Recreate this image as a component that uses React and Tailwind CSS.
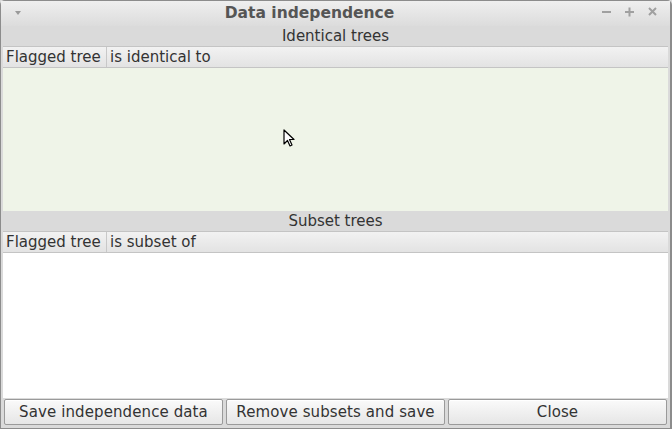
import React from 'react';

const font = { fontFamily: '"DejaVu Sans", Verdana, sans-serif' };

const HeaderRow = ({ second }) => (
  <div className="flex h-[22px] border-t border-b border-[#c4c4c4] bg-gradient-to-b from-[#f2f2f2] to-[#e3e3e3] text-[15px] text-[#333333] leading-[20px]">
    <div className="w-[104px] shrink-0 border-r border-[#c8c8c8] pl-[3px] whitespace-nowrap overflow-hidden">Flagged tree</div>
    <div className="flex-1 pl-[3px]">{second}</div>
  </div>
);

const SectionLabel = ({ children }) => (
  <div className="h-[20px] text-center text-[15px] leading-[20px] text-[#333333]">{children}</div>
);

const Btn = ({ children }) => (
  <button className="flex-1 h-[26px] rounded-[2px] border border-[#9a9a9a] bg-gradient-to-b from-[#fafafa] to-[#e6e6e6] text-[15px] tracking-[0.1px] text-[#333333] shadow-[inset_0_1px_0_#ffffff]">
    {children}
  </button>
);

export default function App() {
  return (
    <div style={font} className="relative w-[672px] h-[429px] overflow-hidden bg-[#dadada]">
      <div className="flex h-full flex-col rounded-t-[5px] border-l border-r-2 border-t border-b border-[#8c8c8c]">
        {/* Title bar */}
        <div className="relative flex h-[25px] shrink-0 items-center justify-center pr-[52px] bg-gradient-to-b from-[#efefef] to-[#dcdcdc]">
          <span className="absolute left-[14px] top-[10px] h-0 w-0 border-x-[3px] border-t-[4px] border-x-transparent border-t-[#9a9a9a]" />
          <span className="text-[15.5px] font-bold text-[#555555]">Data independence</span>
          <div className="absolute right-[12px] top-[6px] flex items-center gap-[13px]">
            <svg width="10" height="10" viewBox="0 0 10 10"><rect x="0" y="4" width="9" height="2" fill="#a0a0a0" /></svg>
            <svg width="10" height="10" viewBox="0 0 10 10"><rect x="0" y="4" width="9" height="2" fill="#a0a0a0" /><rect x="3.5" y="0.5" width="2" height="9" fill="#a0a0a0" /></svg>
            <svg width="10" height="10" viewBox="0 0 10 10"><path d="M1 1L8 8M8 1L1 8" stroke="#a0a0a0" strokeWidth="2" /></svg>
          </div>
        </div>

        {/* Content */}
        <div className="flex flex-1 flex-col px-[2px]">
          <SectionLabel>Identical trees</SectionLabel>
          <HeaderRow second="is identical to" />
          <div className="h-[143px] bg-[#eff4e8]" />
          <SectionLabel>Subset trees</SectionLabel>
          <HeaderRow second="is subset of" />
          <div className="flex-1 bg-white" />
          <div className="flex gap-[3px] px-[1px] pt-[1px] pb-[3px]">
            <Btn>Save independence data</Btn>
            <Btn>Remove subsets and save</Btn>
            <Btn>Close</Btn>
          </div>
        </div>
      </div>

      {/* Mouse cursor */}
      <svg className="absolute left-[283px] top-[129px]" width="14" height="20" viewBox="0 0 14 20">
        <path d="M1 1L1 15L4.5 11.5L7 17L9 16L6.5 10.5L11 10.5Z" fill="#ffffff" stroke="#000000" strokeWidth="1.2" strokeLinejoin="round" />
      </svg>
    </div>
  );
}
